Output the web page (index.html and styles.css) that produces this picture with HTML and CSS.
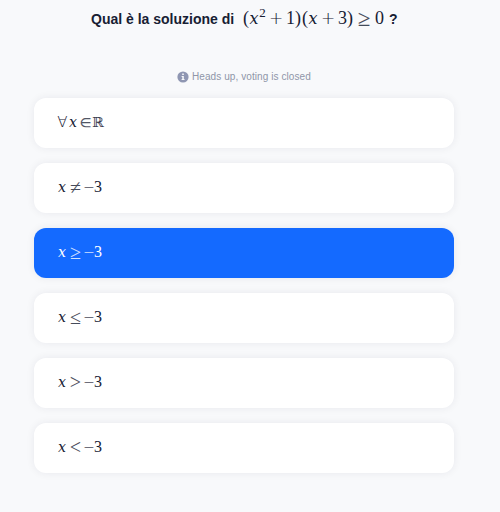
FILE: index.html
```
<!DOCTYPE html>
<html lang="it">
<head>
<meta charset="utf-8">
<title>Sondaggio</title>
<link rel="stylesheet" href="styles.css">
</head>
<body>
<main class="poll">
<h1 class="question"><span class="label">Qual è la soluzione di</span><span class="math title-math"><span class="paren">(</span><i>𝑥</i><sup>2</sup><span class="plus">+</span><span class="digit">1</span><span class="paren">)</span><span class="paren open">(</span><i>𝑥</i><span class="plus second">+</span><span class="digit">3</span><span class="paren">)</span><span class="op">≥</span><span class="digit">0</span></span><span class="mark">?</span></h1>
<p class="notice"><svg width="12" height="12" viewBox="0 0 12 12" aria-hidden="true"><circle cx="6" cy="6" r="5.6" fill="#8f96b2"/><path d="M5.2 2.5h1.6v1.4H5.2zM4.6 5h2.2v3h.7v1H4.6V8h.7V6h-.7z" fill="#f8f9fb"/></svg><span>Heads up, voting is closed</span></p>
<ul class="options">
<li class="option"><span class="math"><span class="forall">∀</span><i>𝑥</i><span class="in">∈</span><span class="real">ℝ</span></span></li>
<li class="option"><span class="math"><i>𝑥</i><span class="op">≠</span><span class="minus">−</span><span class="digit">3</span></span></li>
<li class="option selected"><span class="math"><i>𝑥</i><span class="op">≥</span><span class="minus">−</span><span class="digit">3</span></span></li>
<li class="option"><span class="math"><i>𝑥</i><span class="op">≤</span><span class="minus">−</span><span class="digit">3</span></span></li>
<li class="option"><span class="math"><i>𝑥</i><span class="op">&gt;</span><span class="minus">−</span><span class="digit">3</span></span></li>
<li class="option"><span class="math"><i>𝑥</i><span class="op">&lt;</span><span class="minus">−</span><span class="digit">3</span></span></li>
</ul>
</main>
</body>
</html>
```
FILE: styles.css
```
* { box-sizing: border-box; }
body { margin: 0; min-height: 512px; background: #f8f9fb; color: #172033; font-family: "Liberation Sans", Arial, sans-serif; }
.poll { width: 420px; height: 512px; margin-left: 34px; }
.question { display: flex; align-items: baseline; width: 308px; height: 37px; margin: 0 0 0 57px; font-size: 14px; line-height: 36px; white-space: nowrap; }
.label { width: 152px; }
.mark { margin-left: 5px; }
.notice { display: flex; align-items: center; gap: 3px; height: 16px; margin: 32px 0 13px 143px; color: #8f96a8; font-size: 10px; letter-spacing: .08px; line-height: 16px; white-space: nowrap; }
.options { display: flex; flex-direction: column; gap: 15px; margin: 0; padding: 0; list-style: none; }
.option { height: 50px; padding-left: 23px; border-radius: 12px; background: #fff; box-shadow: 0 0 8px rgba(20, 30, 50, .07); line-height: 48px; }
.selected { background: #146aff; color: #fff; }
.math { display: inline-flex; align-items: baseline; font-family: "Liberation Serif", serif; font-size: 16px; font-weight: 400; }
.math > * { display: flex; justify-content: center; flex: none; }
.math i { width: 10px; font-family: "DejaVu Math TeX Gyre", "Liberation Serif", serif; font-size: 14px; font-style: normal; }
.op { width: 11px; margin: 0 3px; font-family: "Liberation Serif", serif; font-size: 20px; line-height: 1; opacity: .8; transform: translateY(2px); }
.plus, .minus, .forall { font-family: "DejaVu Sans", sans-serif; font-weight: 200; }
.minus { width: 10px; font-size: 14px; opacity: .8; }
.digit { width: 8px; }
.forall { width: 11px; font-size: 15px; }
.in { width: 11px; margin: 0 1px 0 2px; font-family: "Liberation Serif", "DejaVu Math TeX Gyre", serif; font-size: 15px; opacity: .75; }
.real { width: 13px; font-family: "DejaVu Math TeX Gyre", "DejaVu Serif", serif; font-size: 14px; opacity: .85; }
.title-math { font-size: 18px; }
.title-math i { width: 10px; font-size: 16px; }
.title-math sup { width: 7px; font-size: 13px; line-height: 1; transform: translateY(-7px); }
.title-math .paren { width: 6px; font-size: 18px; }
.title-math .open { margin-left: 1px; }
.title-math .plus { width: 12px; margin: 0 4px; font-size: 17px; }
.title-math .digit { width: 9px; }
.title-math .op { width: 14px; margin: 0 4px; font-size: 23px; }
```
